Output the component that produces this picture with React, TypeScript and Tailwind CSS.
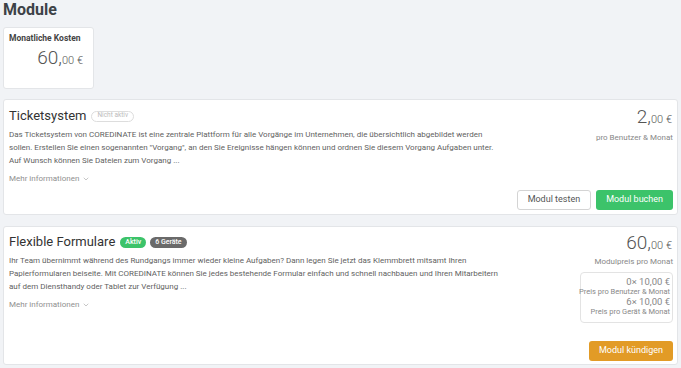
import { ChevronDown } from "lucide-react";

const font = { fontFamily: "Roboto, 'Noto Sans', sans-serif" };

function Price({ main, small }: { main: string; small: string }) {
  return (
    <div className="text-[#555] font-light leading-none whitespace-nowrap">
      <span className="text-[19px]">{main}</span>
      <span className="text-[11px]">{small}</span>
    </div>
  );
}

function MoreInfo() {
  return (
    <div className="mt-[6px] flex items-center gap-[3px] text-[8px] text-[#8f8f8f]">
      Mehr informationen <ChevronDown className="w-[8px] h-[8px]" strokeWidth={1.5} />
    </div>
  );
}

export default function App() {
  return (
    <div className="w-[681px] h-[368px] bg-[#f1f3f6] px-[3px] overflow-hidden" style={font}>
      <h1 className="text-[16px] font-bold text-[#3d4247] leading-[18px] pt-[1px]">Module</h1>

      <div className="mt-[8px] w-[91px] h-[62px] bg-white border border-[#e3e5e8] rounded-[3px] px-[5px] pt-[4px]">
        <div className="text-[8.5px] font-bold text-[#444]">Monatliche Kosten</div>
        <div className="mt-[3px] pr-[5px] flex justify-end items-baseline text-[#555] font-light leading-none">
          <span className="text-[19px]">60,</span>
          <span className="text-[11px]">00 €</span>
        </div>
      </div>

      {/* Ticketsystem */}
      <div className="mt-[10px] h-[116px] bg-white border border-[#e3e5e8] rounded-[3px] pl-[5px] pr-[4px] pt-[7px] pb-[4px] flex">
        <div className="flex-1 min-w-0">
          <div className="flex items-center gap-[5px]">
            <span className="text-[13px] text-[#333] leading-[18px]">Ticketsystem</span>
            <span className="px-[5px] h-[11px] flex items-center rounded-full border border-[#ddd] text-[6.5px] text-[#bbb]">Nicht aktiv</span>
          </div>
          <p className="mt-[3px] text-[8px] leading-[13px] text-[#5f5f5f]">
            Das Ticketsystem von COREDINATE ist eine zentrale Plattform für alle Vorgänge im Unternehmen, die übersichtlich abgebildet werden
            <br />
            sollen. Erstellen Sie einen sogenannten "Vorgang", an den Sie Ereignisse hängen können und ordnen Sie diesem Vorgang Aufgaben unter.
            <br />
            Auf Wunsch können Sie Dateien zum Vorgang ...
          </p>
          <MoreInfo />
        </div>
        <div className="flex flex-col items-end">
          <div className="pr-[1px]">
            <Price main="2," small="00 €" />
          </div>
          <div className="mt-[6px] text-[8px] text-[#888]">pro Benutzer &amp; Monat</div>
          <div className="mt-auto flex gap-[5px]">
            <button className="h-[20px] px-[10px] border border-[#d4d4d4] rounded-[3px] text-[9px] text-[#555] bg-white">Modul testen</button>
            <button className="h-[20px] px-[10px] rounded-[3px] text-[9px] text-white bg-[#3cc36a]">Modul buchen</button>
          </div>
        </div>
      </div>

      {/* Flexible Formulare */}
      <div className="mt-[11px] h-[139px] bg-white border border-[#e3e5e8] rounded-[3px] pl-[5px] pr-[4px] pt-[6px] pb-[3px] flex">
        <div className="flex-1 min-w-0">
          <div className="flex items-center gap-[4px]">
            <span className="text-[13px] text-[#333] leading-[18px] mr-[1px]">Flexible Formulare</span>
            <span className="px-[5px] h-[11px] flex items-center rounded-full bg-[#3cc36a] text-[7px] font-medium text-white">Aktiv</span>
            <span className="px-[5px] h-[11px] flex items-center rounded-full bg-[#6a6a6a] text-[7px] font-medium text-white">6 Geräte</span>
          </div>
          <p className="mt-[3px] text-[8px] leading-[13px] text-[#5f5f5f]">
            Ihr Team übernimmt während des Rundgangs immer wieder kleine Aufgaben? Dann legen Sie jetzt das Klemmbrett mitsamt Ihren
            <br />
            Papierformularen beiseite. Mit COREDINATE können Sie jedes bestehende Formular einfach und schnell nachbauen und Ihren Mitarbeitern
            <br />
            auf dem Diensthandy oder Tablet zur Verfügung ...
          </p>
          <MoreInfo />
        </div>
        <div className="flex flex-col items-end">
          <div className="pr-[1px]">
            <Price main="60," small="00 €" />
          </div>
          <div className="mt-[4px] text-[8px] text-[#888]">Modulpreis pro Monat</div>
          <div className="mt-[4px] w-[93px] h-[51px] border border-[#e3e3e3] rounded-[4px] px-[2px] pt-[3px] flex flex-col items-end text-[#888] leading-[11px]">
            <div className="text-[9.5px]">0× 10,00 €</div>
            <div className="text-[7.5px] leading-[9px] whitespace-nowrap">Preis pro Benutzer &amp; Monat</div>
            <div className="text-[9.5px]">6× 10,00 €</div>
            <div className="text-[7.5px] leading-[9px] whitespace-nowrap">Preis pro Gerät &amp; Monat</div>
          </div>
          <div className="mt-auto">
            <button className="h-[20px] px-[10px] rounded-[3px] text-[9px] text-white bg-[#e29b26]">Modul kündigen</button>
          </div>
        </div>
      </div>
    </div>
  );
}
